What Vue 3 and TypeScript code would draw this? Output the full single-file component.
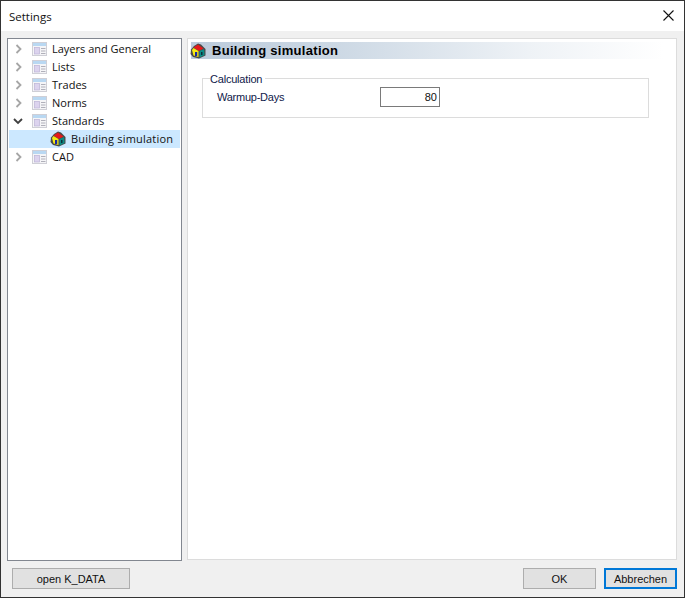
<script setup lang="ts">
interface Row { label: string; open?: boolean; child?: boolean; selected?: boolean }
const rows: Row[] = [
  { label: 'Layers and General' },
  { label: 'Lists' },
  { label: 'Trades' },
  { label: 'Norms' },
  { label: 'Standards', open: true },
  { label: 'Building simulation', child: true, selected: true },
  { label: 'CAD' },
]
</script>

<template>
  <div class="window">
    <header class="titlebar">
      <span class="title">Settings</span>
      <svg class="close" width="11" height="11" viewBox="0 0 11 11">
        <path d="M0.5 0.5 L10.5 10.5 M10.5 0.5 L0.5 10.5" stroke="#111" stroke-width="1.1" fill="none" />
      </svg>
    </header>
    <div class="body">
      <div class="main">
        <aside class="tree">
          <div v-for="row in rows" :key="row.label" class="row" :class="{ selected: row.selected, child: row.child }">
            <template v-if="!row.child">
              <svg class="chev" width="10" height="10" viewBox="0 0 10 10">
                <path v-if="row.open" d="M1 3 L5 7 L9 3" stroke="#404040" stroke-width="1.8" fill="none" />
                <path v-else d="M3.5 1 L7.5 5 L3.5 9" stroke="#a6a6a6" stroke-width="1.8" fill="none" />
              </svg>
              <svg class="doc" width="15" height="14" viewBox="0 0 15 14">
                <rect x="0.5" y="0.5" width="14" height="13" fill="#f5f5f7" stroke="#cfcfd6" />
                <rect x="1" y="1" width="13" height="3" fill="#b9d8f2" />
                <rect x="2.5" y="5.5" width="5" height="6.5" fill="#dcd3ee" stroke="#bdb4d6" stroke-width="0.7" />
                <path d="M9 6.5 H13.5 M9 9 H13.5 M9 11.5 H13.5" stroke="#b0b0ba" />
              </svg>
            </template>
            <svg v-else class="house" width="16" height="16" viewBox="0 0 16 16">
              <path d="M8 0.5 L11 1.5 L15.5 6 L15.5 12.5 L9 15.5 L3 14 L0.5 11 L1 6.5 L4 3 Z" fill="#4a4a4a" />
              <path d="M3.5 4.5 L8 1.5 L13.5 5.5 L9 8 Z" fill="#e51a1a" />
              <path d="M2 7 L3.5 5 L8.5 8 L8.5 14 L3.5 12.5 Z" fill="#f7ea12" />
              <path d="M9.5 8 L14 6 L14.5 12 L9.5 14.5 Z" fill="#0c8c86" />
              <rect x="5" y="9" width="2.2" height="4" fill="#1726a6" />
              <rect x="11" y="9" width="1.5" height="3" fill="#0b2f3a" />
            </svg>
            <span class="label">{{ row.label }}</span>
          </div>
        </aside>
        <section class="panel">
          <div class="heading">
            <svg class="house" width="16" height="16" viewBox="0 0 16 16">
              <path d="M8 0.5 L11 1.5 L15.5 6 L15.5 12.5 L9 15.5 L3 14 L0.5 11 L1 6.5 L4 3 Z" fill="#4a4a4a" />
              <path d="M3.5 4.5 L8 1.5 L13.5 5.5 L9 8 Z" fill="#e51a1a" />
              <path d="M2 7 L3.5 5 L8.5 8 L8.5 14 L3.5 12.5 Z" fill="#f7ea12" />
              <path d="M9.5 8 L14 6 L14.5 12 L9.5 14.5 Z" fill="#0c8c86" />
              <rect x="5" y="9" width="2.2" height="4" fill="#1726a6" />
              <rect x="11" y="9" width="1.5" height="3" fill="#0b2f3a" />
            </svg>
            <span class="heading-text">Building simulation</span>
          </div>
          <fieldset class="group">
            <legend>Calculation</legend>
            <div class="field">
              <span>Warmup-Days</span>
              <div class="input">80</div>
            </div>
          </fieldset>
        </section>
      </div>
      <footer class="footer">
        <button class="btn wide">open K_DATA</button>
        <div class="actions">
          <button class="btn">OK</button>
          <button class="btn primary">Abbrechen</button>
        </div>
      </footer>
    </div>
  </div>
</template>

<style scoped>
.window {
  width: 685px;
  height: 598px;
  box-sizing: border-box;
  border: 1px solid #333;
  display: flex;
  flex-direction: column;
  background: #f0f0f0;
  font-family: "Liberation Sans", Arial, sans-serif;
  font-size: 11px;
  color: #111;
}
.titlebar {
  height: 30px;
  flex: none;
  background: #fff;
  display: flex;
  align-items: center;
  justify-content: space-between;
  padding: 0 10px 1px 8px;
  box-sizing: border-box;
}
.title {
  font-family: "Open Sans", sans-serif;
  font-size: 11.5px;
  line-height: 16px;
  margin-top: 2px;
}
.close { display: block; }
.body {
  flex: 1;
  display: flex;
  flex-direction: column;
  padding: 7px 7px 7px 6px;
  min-height: 0;
}
.main {
  flex: 1;
  display: flex;
  gap: 5px;
  min-height: 0;
}
.tree {
  width: 175px;
  height: 523px;
  box-sizing: border-box;
  background: #fff;
  border: 1px solid #828790;
  padding: 1px;
  font-family: "Open Sans", sans-serif;
  font-size: 11px;
}
.row {
  height: 18px;
  display: flex;
  align-items: center;
  padding-left: 4px;
}
.row.child {
  padding-left: 41px;
  letter-spacing: 0.2px;
}
.row.selected { background: #cce8ff; }
.label { margin-top: -1px; }
.chev { margin-right: 9px; flex: none; }
.doc { margin-right: 5px; flex: none; }
.house { flex: none; margin-right: 5px; }
.panel {
  width: 490px;
  height: 522px;
  box-sizing: border-box;
  background: #fff;
  border: 1px solid #dcdcdc;
  padding: 3px;
}
.heading {
  height: 17px;
  display: flex;
  align-items: center;
  background: linear-gradient(to right, #bccbdb, #ccd8e4 30%, #eef2f6 70%, #fff 98%);
}
.heading .house { margin-right: 6px; margin-left: -1px; }
.heading-text {
  font-weight: 700;
  font-size: 13px;
  letter-spacing: 0.3px;
  color: #000;
}
.group {
  margin: 12px 0 0 11px;
  width: 447px;
  height: 47px;
  box-sizing: border-box;
  border: 1px solid #dcdcdc;
  padding: 0 0 0 14px;
  min-width: 0;
}
legend {
  padding: 0 3px 0 0;
  margin-left: -7px;
  font-size: 11px;
  letter-spacing: -0.2px;
  color: #10204a;
  line-height: 14px;
  position: relative;
  top: 1px;
}
.field {
  display: flex;
  align-items: center;
  height: 20px;
  margin-top: 2px;
  color: #10204a;
  letter-spacing: -0.25px;
}
.field span { width: 163px; }
.input {
  width: 60px;
  height: 20px;
  box-sizing: border-box;
  border: 1px solid #7a7a7a;
  text-align: right;
  padding-right: 2px;
  line-height: 18px;
  font-size: 11px;
  letter-spacing: 0;
  color: #111;
}
.footer {
  flex: none;
  display: flex;
  justify-content: space-between;
  padding: 7px 0 1px 5px;
}
.actions { display: flex; gap: 8px; }
.btn {
  width: 73px;
  height: 21px;
  box-sizing: border-box;
  border: 1px solid #adadad;
  background: #e1e1e1;
  font-family: "Liberation Sans", Arial, sans-serif;
  font-size: 11px;
  color: #111;
  padding: 0;
}
.btn.wide { width: 118px; }
.btn.primary { border: 2px solid #0078d7; }
</style>
<style>
html, body { margin: 0; background: #f0f0f0; overflow: hidden; }
</style>
